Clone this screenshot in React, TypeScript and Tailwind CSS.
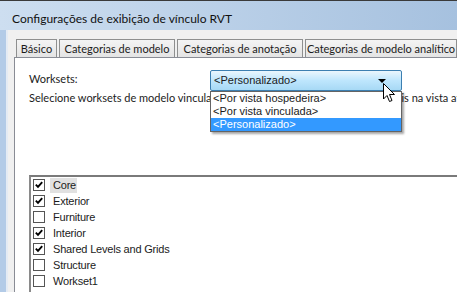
import React from "react";

const tabs = [
  { label: "Básico", w: "w-[41px]" },
  { label: "Categorias de modelo", w: "w-[116px]" },
  { label: "Categorias de anotação", w: "w-[126px]" },
  { label: "Categorias de modelo analítico", w: "w-[152px]" },
];

const worksets = [
  { name: "Core", checked: true, focused: true },
  { name: "Exterior", checked: true },
  { name: "Furniture", checked: false },
  { name: "Interior", checked: true },
  { name: "Shared Levels and Grids", checked: true },
  { name: "Structure", checked: false },
  { name: "Workset1", checked: false },
];

const options = ["<Por vista hospedeira>", "<Por vista vinculada>", "<Personalizado>"];

function CheckBox({ checked }: { checked: boolean }) {
  return (
    <span className="flex h-[12px] w-[12px] shrink-0 items-center justify-center border border-[#555] bg-white">
      {checked && (
        <svg width="8" height="8" viewBox="0 0 8 8">
          <path d="M0.8 3.6 L3 5.8 L7.2 1.2" fill="none" stroke="#000" strokeWidth="1.9" />
        </svg>
      )}
    </span>
  );
}

function Cursor() {
  return (
    <svg width="13" height="20" viewBox="0 0 13 20" className="absolute left-[383px] top-[83px]">
      <path
        d="M0.5 0.5 L0.5 16 L4 12.5 L6.5 18.5 L9 17.5 L6.5 11.5 L11.5 11.5 Z"
        fill="#fff"
        stroke="#000"
        strokeWidth="1"
        strokeLinejoin="round"
      />
    </svg>
  );
}

export default function App() {
  return (
    <div className="relative h-[292px] w-[457px] overflow-hidden bg-[#3a3a3a] font-['Lato',sans-serif] text-[#1b1b1b]">
      <div className="mt-px flex h-[29px] items-center bg-gradient-to-r from-[#cddef0] to-[#a6c1df] pl-[12px] pt-[6px] text-[12px] text-[#111]">
        Configurações de exibição de vínculo RVT
      </div>
      <div className="flex h-[262px]">
        <div className="w-[6px] shrink-0 bg-[#b3cbe7]" />
        <div className="w-[2px] shrink-0 bg-[#e4ebf4]" />
        <div className="flex min-w-0 flex-1 flex-col bg-[#f0f0f0] pl-[6px] pt-[9px]">
          <div className="flex gap-[2px] pl-[2px]">
            {tabs.map((t) => (
              <div
                key={t.label}
                className={`flex h-[18px] shrink-0 items-center justify-center whitespace-nowrap border border-b-0 border-[#8e8f8f] bg-gradient-to-b from-[#f4f4f4] to-[#e4e4e4] text-[11px] leading-none ${t.w}`}
              >
                {t.label}
              </div>
            ))}
          </div>
          <div className="relative flex-1 border-l border-t border-[#898c95] bg-white pl-[14px]">
            <div className="mt-[13px] text-[11px] leading-[16px]">Worksets:</div>
            <div className="mt-[3px] whitespace-nowrap text-[11px] leading-[16px]">
              Selecione worksets de modelo vinculado que deseja tornar visíveis ou invisíveis na vista atual.
            </div>
            <div className="mt-[69px] h-[200px] border-l-2 border-t-2 border-l-[#8a8a8a] border-t-[#7a7a7a] pl-[2px] font-['Liberation_Sans',sans-serif] text-[11px] tracking-[-0.2px]">
              {worksets.map((w) => (
                <div key={w.name} className="flex h-[16px] items-center">
                  <CheckBox checked={w.checked} />
                  <span
                    className={`ml-[5px] flex h-[15px] items-center pl-[3px] pr-[1px] ${w.focused ? "bg-[#e1e1e1]" : ""}`}
                  >
                    {w.name}
                  </span>
                </div>
              ))}
            </div>
          </div>
        </div>
      </div>

      <div className="absolute left-[210px] top-[70px] w-[192px] font-['Liberation_Sans',sans-serif] text-[11px]">
        <div className="flex h-[21px] items-center justify-between rounded-[2px] border border-[#3c7fb1] bg-gradient-to-b from-[#eaf6fd] via-[#bee6fd] to-[#a7d9f5] pl-[3px] pr-[15px]">
          <span>{"<Personalizado>"}</span>
          <svg width="8" height="4" viewBox="0 0 8 4">
            <path d="M0 0 H8 L4 4 Z" fill="#000" />
          </svg>
        </div>
        <div className="border border-[#646464] bg-white shadow-[2px_2px_2px_rgba(0,0,0,0.35)]">
          {options.map((o, i) => (
            <div
              key={o}
              className={`flex h-[13px] items-center pl-[2px] ${i === 2 ? "bg-[#3399ff] text-white" : ""}`}
            >
              {o}
            </div>
          ))}
        </div>
      </div>
      <Cursor />
    </div>
  );
}
